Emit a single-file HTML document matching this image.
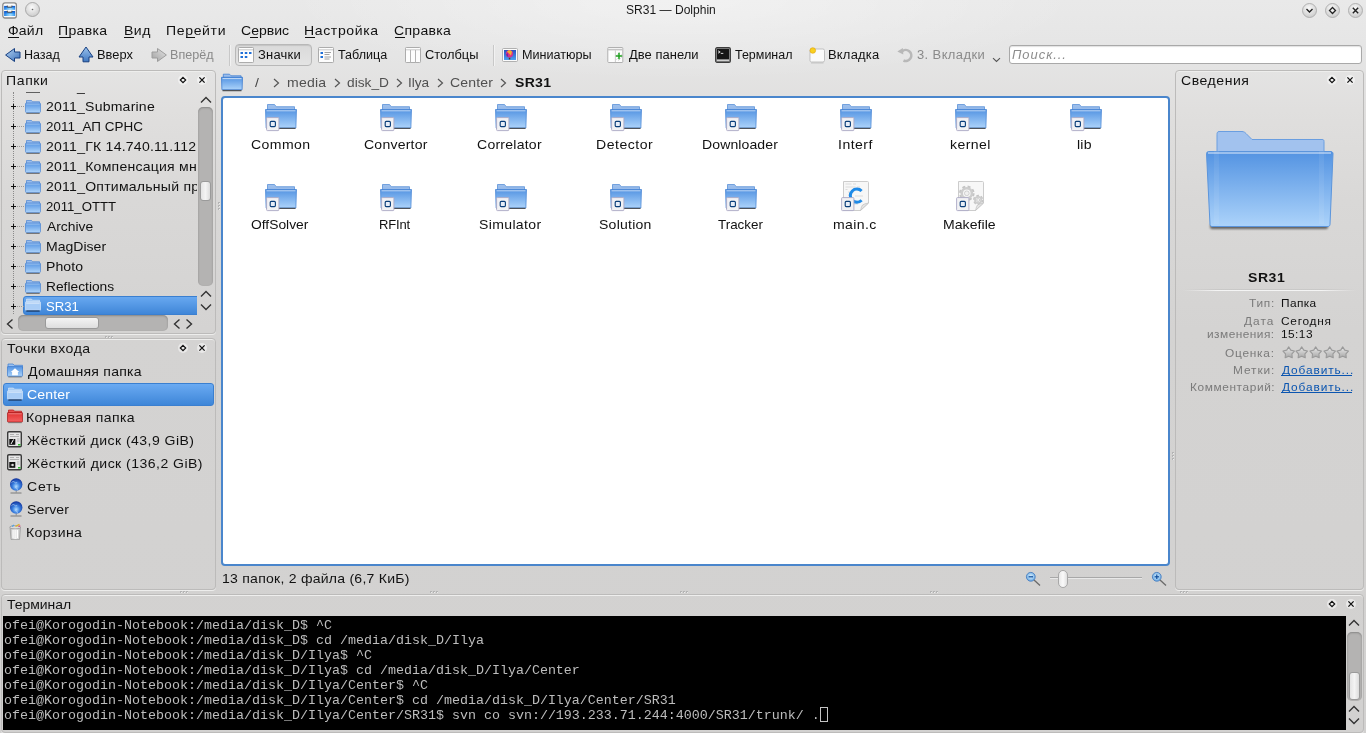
<!DOCTYPE html>
<html><head><meta charset="utf-8"><style>
*{margin:0;padding:0;box-sizing:border-box}
html,body{width:1366px;height:733px;overflow:hidden}
body{position:relative;font-family:"Liberation Sans",sans-serif;color:#111;background:linear-gradient(#e9e9e9 0px,#e5e5e5 55px,#e0dfde 110px,#d9d8d7 200px,#d4d3d2 330px,#d2d1d0 733px)}
.a{position:absolute}
.t{position:absolute;white-space:nowrap;will-change:transform}
.panel{position:absolute;border:1px solid #bcbbba;border-radius:4px;background:transparent;box-shadow:0 1px 0 #ededec,inset 0 1px 0 #eeeeed}
svg{position:absolute;overflow:visible}
</style></head><body>
<svg width="0" height="0" style="left:0;top:0"><defs>
<linearGradient id="gf" x1="0" y1="0" x2="0" y2="1"><stop offset="0" stop-color="#5393e2"/><stop offset="1" stop-color="#acd3fa"/></linearGradient>
<linearGradient id="gt" x1="0" y1="0" x2="0" y2="1"><stop offset="0" stop-color="#9fc0ec"/><stop offset="1" stop-color="#8fb5e8"/></linearGradient>
<linearGradient id="gr" x1="0" y1="0" x2="0" y2="1"><stop offset="0" stop-color="#e03030"/><stop offset="1" stop-color="#f46060"/></linearGradient>
<linearGradient id="gsel" x1="0" y1="0" x2="0" y2="1"><stop offset="0" stop-color="#6aaaf0"/><stop offset="1" stop-color="#3f86d8"/></linearGradient>
<linearGradient id="garr" x1="0" y1="0" x2="0" y2="1"><stop offset="0" stop-color="#9cc4ee"/><stop offset="1" stop-color="#3f77c0"/></linearGradient>
<linearGradient id="ggrey" x1="0" y1="0" x2="0" y2="1"><stop offset="0" stop-color="#d8d8d8"/><stop offset="1" stop-color="#9c9c9c"/></linearGradient>
<radialGradient id="gbtn" cx=".45" cy=".35" r=".7"><stop offset="0" stop-color="#fafafa"/><stop offset="1" stop-color="#c8c8c8"/></radialGradient>
<radialGradient id="gglobe" cx=".5" cy=".65" r=".65"><stop offset="0" stop-color="#b0dcff"/><stop offset=".45" stop-color="#3a80e0"/><stop offset="1" stop-color="#10309a"/></radialGradient>
<radialGradient id="glens" cx=".5" cy=".45" r=".6"><stop offset="0" stop-color="#e0f4ff"/><stop offset="1" stop-color="#5aa0e0"/></radialGradient>
<linearGradient id="garr2" x1="0" y1="0" x2="1" y2="1"><stop offset="0" stop-color="#b4d4f4"/><stop offset="1" stop-color="#3a6fb8"/></linearGradient>
<linearGradient id="ggrey2" x1="1" y1="0" x2="0" y2="1"><stop offset="0" stop-color="#e4e4e4"/><stop offset="1" stop-color="#a0a0a0"/></linearGradient>
<linearGradient id="gtr" x1="0" y1="0" x2="1" y2="0"><stop offset="0" stop-color="#b8b8b8"/><stop offset=".5" stop-color="#f6f6f6"/><stop offset="1" stop-color="#c0c0c0"/></linearGradient>
<linearGradient id="gsky" x1="0" y1="0" x2="0" y2="1"><stop offset="0" stop-color="#2a50c0"/><stop offset="1" stop-color="#4aa0f0"/></linearGradient>
<linearGradient id="gstar" x1="0" y1="0" x2="0" y2="1"><stop offset="0" stop-color="#ececec"/><stop offset="1" stop-color="#a6a6a6"/></linearGradient>
<filter id="blur1" x="-20%" y="-100%" width="140%" height="300%"><feGaussianBlur stdDeviation="1.2"/></filter>
<radialGradient id="gdrw" cx=".55" cy=".8" r=".7"><stop offset="0" stop-color="#b8ecff"/><stop offset=".6" stop-color="#3a9af0"/><stop offset="1" stop-color="#1560d0"/></radialGradient>
</defs></svg>
<div class="a" style="left:283px;top:0;width:800px;height:90px;background:radial-gradient(ellipse 400px 80px at 400px 0,rgba(255,255,255,.4),rgba(255,255,255,0))"></div>
<div class="panel" style="left:1px;top:70px;width:215px;height:264px"></div>
<div class="panel" style="left:1px;top:338px;width:215px;height:252px"></div>
<div class="panel" style="left:1175px;top:70px;width:189px;height:520px"></div>
<div class="panel" style="left:1px;top:594px;width:1363px;height:139px"></div>
<div class="a" style="left:221px;top:96px;width:949px;height:470px;background:#fff;border:2px solid #4a86cc;border-radius:4px"></div>
<div class="a" style="left:3px;top:616px;width:1343px;height:114px;background:#000"></div>
<div class="t" style="left:626.20px;top:4px;font-size:12px;line-height:12px;color:#1a1a1a;letter-spacing:0.000px;transform:scaleX(1.005);transform-origin:0 0">SR31 — Dolphin</div>
<div class="t" style="left:7.89px;top:24px;font-size:13px;line-height:13px;color:#111;letter-spacing:0.173px;transform:scaleX(1.080);transform-origin:0 0">Файл</div>
<div class="t" style="left:58.22px;top:24px;font-size:13px;line-height:13px;color:#111;letter-spacing:0.289px;transform:scaleX(1.080);transform-origin:0 0">Правка</div>
<div class="t" style="left:123.52px;top:24px;font-size:13px;line-height:13px;color:#111;letter-spacing:0.463px;transform:scaleX(1.080);transform-origin:0 0">Вид</div>
<div class="t" style="left:166.12px;top:24px;font-size:13px;line-height:13px;color:#111;letter-spacing:0.597px;transform:scaleX(1.080);transform-origin:0 0">Перейти</div>
<div class="t" style="left:240.59px;top:24px;font-size:13px;line-height:13px;color:#111;letter-spacing:0.000px;transform:scaleX(1.080);transform-origin:0 0">Сервис</div>
<div class="t" style="left:304.32px;top:24px;font-size:13px;line-height:13px;color:#111;letter-spacing:0.586px;transform:scaleX(1.080);transform-origin:0 0">Настройка</div>
<div class="t" style="left:394.49px;top:24px;font-size:13px;line-height:13px;color:#111;letter-spacing:0.282px;transform:scaleX(1.080);transform-origin:0 0">Справка</div>
<div class="a" style="left:8px;top:37px;width:11px;height:1px;background:#111"></div>
<div class="a" style="left:59px;top:37px;width:12px;height:1px;background:#111"></div>
<div class="a" style="left:124px;top:37px;width:10px;height:1px;background:#111"></div>
<div class="a" style="left:186px;top:37px;width:9px;height:1px;background:#111"></div>
<div class="a" style="left:250px;top:37px;width:8px;height:1px;background:#111"></div>
<div class="a" style="left:305px;top:37px;width:10px;height:1px;background:#111"></div>
<div class="a" style="left:395px;top:37px;width:10px;height:1px;background:#111"></div>
<div class="t" style="left:24.26px;top:49px;font-size:12px;line-height:12px;color:#111;letter-spacing:0.000px;transform:scaleX(1.044);transform-origin:0 0">Назад</div>
<div class="t" style="left:97.43px;top:49px;font-size:12px;line-height:12px;color:#111;letter-spacing:0.000px;transform:scaleX(1.070);transform-origin:0 0">Вверх</div>
<div class="t" style="left:169.55px;top:49px;font-size:12px;line-height:12px;color:#8a8a8a;letter-spacing:0.000px;transform:scaleX(1.048);transform-origin:0 0">Вперёд</div>
<div class="t" style="left:258.26px;top:49px;font-size:12px;line-height:12px;color:#111;letter-spacing:0.217px;transform:scaleX(1.080);transform-origin:0 0">Значки</div>
<div class="t" style="left:338.24px;top:49px;font-size:12px;line-height:12px;color:#111;letter-spacing:0.000px;transform:scaleX(1.047);transform-origin:0 0">Таблица</div>
<div class="t" style="left:425.06px;top:49px;font-size:12px;line-height:12px;color:#111;letter-spacing:0.000px;transform:scaleX(1.072);transform-origin:0 0">Столбцы</div>
<div class="t" style="left:521.55px;top:49px;font-size:12px;line-height:12px;color:#111;letter-spacing:0.000px;transform:scaleX(1.052);transform-origin:0 0">Миниатюры</div>
<div class="t" style="left:628.90px;top:49px;font-size:12px;line-height:12px;color:#111;letter-spacing:0.023px;transform:scaleX(1.080);transform-origin:0 0">Две панели</div>
<div class="t" style="left:734.94px;top:49px;font-size:12px;line-height:12px;color:#111;letter-spacing:-0.000px;transform:scaleX(1.040);transform-origin:0 0">Терминал</div>
<div class="t" style="left:828.32px;top:49px;font-size:12px;line-height:12px;color:#111;letter-spacing:0.190px;transform:scaleX(1.080);transform-origin:0 0">Вкладка</div>
<div class="t" style="left:916.96px;top:49px;font-size:12px;line-height:12px;color:#8a8a8a;letter-spacing:0.369px;transform:scaleX(1.080);transform-origin:0 0">3. Вкладки</div>
<div class="a" style="left:1009px;top:45px;width:353px;height:19px;background:#fff;border:1px solid #a9a9a9;border-radius:3px;box-shadow:inset 0 1px 1px rgba(0,0,0,.12)"></div>
<div class="t" style="left:1012.13px;top:49px;font-size:12px;line-height:12px;color:#8c8c8c;letter-spacing:0.892px;font-style:italic;transform:scaleX(1.080);transform-origin:0 0">Поиск...</div>
<div class="t" style="left:6.42px;top:74px;font-size:13px;line-height:13px;color:#111;letter-spacing:0.572px;transform:scaleX(1.080);transform-origin:0 0">Папки</div>
<div class="t" style="left:7.33px;top:342px;font-size:13px;line-height:13px;color:#111;letter-spacing:0.476px;transform:scaleX(1.080);transform-origin:0 0">Точки входа</div>
<div class="t" style="left:1180.89px;top:74px;font-size:13px;line-height:13px;color:#111;letter-spacing:0.507px;transform:scaleX(1.080);transform-origin:0 0">Сведения</div>
<div class="t" style="left:7.03px;top:598px;font-size:13px;line-height:13px;color:#111;letter-spacing:0.000px;transform:scaleX(1.072);transform-origin:0 0">Терминал</div>
<div class="a" style="left:4px;top:92px;width:193px;height:223px;overflow:hidden">
<div class="t" style="left:41.89px;top:-12px;font-size:13px;line-height:13px;color:#111;letter-spacing:0.200px;transform:scaleX(1.080);transform-origin:0 0">2011_Submarine</div>
<div class="a" style="left:19px;top:204px;width:182px;height:19px;background:linear-gradient(#68a8f0,#3f86d8);border:1px solid #3a7fd0;border-radius:3px"></div>
<div class="t" style="left:41.89px;top:8px;font-size:13px;line-height:13px;color:#111;letter-spacing:0.200px;transform:scaleX(1.080);transform-origin:0 0">2011_Submarine</div>
<div class="t" style="left:41.92px;top:28px;font-size:13px;line-height:13px;color:#111;letter-spacing:0.000px;transform:scaleX(1.036);transform-origin:0 0">2011_АП СРНС</div>
<div class="t" style="left:41.89px;top:48px;font-size:13px;line-height:13px;color:#111;letter-spacing:0.220px;transform:scaleX(1.080);transform-origin:0 0">2011_ГК 14.740.11.112</div>
<div class="t" style="left:41.89px;top:68px;font-size:13px;line-height:13px;color:#111;letter-spacing:0.220px;transform:scaleX(1.080);transform-origin:0 0">2011_Компенсация мн</div>
<div class="t" style="left:41.89px;top:88px;font-size:13px;line-height:13px;color:#111;letter-spacing:0.220px;transform:scaleX(1.080);transform-origin:0 0">2011_Оптимальный пр</div>
<div class="t" style="left:41.94px;top:108px;font-size:13px;line-height:13px;color:#111;letter-spacing:0.000px;transform:scaleX(1.014);transform-origin:0 0">2011_OTTT</div>
<div class="t" style="left:42.70px;top:128px;font-size:13px;line-height:13px;color:#111;letter-spacing:0.000px;transform:scaleX(1.064);transform-origin:0 0">Archive</div>
<div class="t" style="left:41.62px;top:148px;font-size:13px;line-height:13px;color:#111;letter-spacing:0.005px;transform:scaleX(1.080);transform-origin:0 0">MagDiser</div>
<div class="t" style="left:41.62px;top:168px;font-size:13px;line-height:13px;color:#111;letter-spacing:0.069px;transform:scaleX(1.080);transform-origin:0 0">Photo</div>
<div class="t" style="left:41.64px;top:188px;font-size:13px;line-height:13px;color:#111;letter-spacing:0.000px;transform:scaleX(1.060);transform-origin:0 0">Reflections</div>
<div class="t" style="left:42.19px;top:208px;font-size:13px;line-height:13px;color:#fff;letter-spacing:-0.000px;transform:scaleX(1.011);transform-origin:0 0">SR31</div>
</div>
<div class="a" style="left:13px;top:92px;width:1px;height:222px;border-left:1px dotted #8a8a8a"></div>
<div class="a" style="left:17px;top:106px;width:7px;height:1px;border-top:1px dotted #9a9a9a"></div>
<div class="a" style="left:11px;top:106px;width:5px;height:1px;background:#111"></div>
<div class="a" style="left:13px;top:104px;width:1px;height:5px;background:#111"></div>
<svg style="left:25px;top:98px" width="16" height="16" viewBox="0 0 16 16"><path d="M1.5 2.5h5l1 1.2h7v3h-13z" fill="url(#gt)" stroke="#3b7bd0" stroke-width=".6"/><rect x=".5" y="5" width="15" height="9.5" rx="1" fill="url(#gf)" stroke="#3b7bd0" stroke-width=".6"/><path d="M1.3 6h13.4" stroke="#fff" stroke-opacity=".55" stroke-width=".8"/><path d="M1.3 15.4h13.4" stroke="#505050" stroke-opacity=".75" stroke-width="1.1"/></svg>
<div class="a" style="left:17px;top:126px;width:7px;height:1px;border-top:1px dotted #9a9a9a"></div>
<div class="a" style="left:11px;top:126px;width:5px;height:1px;background:#111"></div>
<div class="a" style="left:13px;top:124px;width:1px;height:5px;background:#111"></div>
<svg style="left:25px;top:118px" width="16" height="16" viewBox="0 0 16 16"><path d="M1.5 2.5h5l1 1.2h7v3h-13z" fill="url(#gt)" stroke="#3b7bd0" stroke-width=".6"/><rect x=".5" y="5" width="15" height="9.5" rx="1" fill="url(#gf)" stroke="#3b7bd0" stroke-width=".6"/><path d="M1.3 6h13.4" stroke="#fff" stroke-opacity=".55" stroke-width=".8"/><path d="M1.3 15.4h13.4" stroke="#505050" stroke-opacity=".75" stroke-width="1.1"/></svg>
<div class="a" style="left:17px;top:146px;width:7px;height:1px;border-top:1px dotted #9a9a9a"></div>
<div class="a" style="left:11px;top:146px;width:5px;height:1px;background:#111"></div>
<div class="a" style="left:13px;top:144px;width:1px;height:5px;background:#111"></div>
<svg style="left:25px;top:138px" width="16" height="16" viewBox="0 0 16 16"><path d="M1.5 2.5h5l1 1.2h7v3h-13z" fill="url(#gt)" stroke="#3b7bd0" stroke-width=".6"/><rect x=".5" y="5" width="15" height="9.5" rx="1" fill="url(#gf)" stroke="#3b7bd0" stroke-width=".6"/><path d="M1.3 6h13.4" stroke="#fff" stroke-opacity=".55" stroke-width=".8"/><path d="M1.3 15.4h13.4" stroke="#505050" stroke-opacity=".75" stroke-width="1.1"/></svg>
<div class="a" style="left:17px;top:166px;width:7px;height:1px;border-top:1px dotted #9a9a9a"></div>
<div class="a" style="left:11px;top:166px;width:5px;height:1px;background:#111"></div>
<div class="a" style="left:13px;top:164px;width:1px;height:5px;background:#111"></div>
<svg style="left:25px;top:158px" width="16" height="16" viewBox="0 0 16 16"><path d="M1.5 2.5h5l1 1.2h7v3h-13z" fill="url(#gt)" stroke="#3b7bd0" stroke-width=".6"/><rect x=".5" y="5" width="15" height="9.5" rx="1" fill="url(#gf)" stroke="#3b7bd0" stroke-width=".6"/><path d="M1.3 6h13.4" stroke="#fff" stroke-opacity=".55" stroke-width=".8"/><path d="M1.3 15.4h13.4" stroke="#505050" stroke-opacity=".75" stroke-width="1.1"/></svg>
<div class="a" style="left:17px;top:186px;width:7px;height:1px;border-top:1px dotted #9a9a9a"></div>
<div class="a" style="left:11px;top:186px;width:5px;height:1px;background:#111"></div>
<div class="a" style="left:13px;top:184px;width:1px;height:5px;background:#111"></div>
<svg style="left:25px;top:178px" width="16" height="16" viewBox="0 0 16 16"><path d="M1.5 2.5h5l1 1.2h7v3h-13z" fill="url(#gt)" stroke="#3b7bd0" stroke-width=".6"/><rect x=".5" y="5" width="15" height="9.5" rx="1" fill="url(#gf)" stroke="#3b7bd0" stroke-width=".6"/><path d="M1.3 6h13.4" stroke="#fff" stroke-opacity=".55" stroke-width=".8"/><path d="M1.3 15.4h13.4" stroke="#505050" stroke-opacity=".75" stroke-width="1.1"/></svg>
<div class="a" style="left:17px;top:206px;width:7px;height:1px;border-top:1px dotted #9a9a9a"></div>
<div class="a" style="left:11px;top:206px;width:5px;height:1px;background:#111"></div>
<div class="a" style="left:13px;top:204px;width:1px;height:5px;background:#111"></div>
<svg style="left:25px;top:198px" width="16" height="16" viewBox="0 0 16 16"><path d="M1.5 2.5h5l1 1.2h7v3h-13z" fill="url(#gt)" stroke="#3b7bd0" stroke-width=".6"/><rect x=".5" y="5" width="15" height="9.5" rx="1" fill="url(#gf)" stroke="#3b7bd0" stroke-width=".6"/><path d="M1.3 6h13.4" stroke="#fff" stroke-opacity=".55" stroke-width=".8"/><path d="M1.3 15.4h13.4" stroke="#505050" stroke-opacity=".75" stroke-width="1.1"/></svg>
<div class="a" style="left:17px;top:226px;width:7px;height:1px;border-top:1px dotted #9a9a9a"></div>
<div class="a" style="left:11px;top:226px;width:5px;height:1px;background:#111"></div>
<div class="a" style="left:13px;top:224px;width:1px;height:5px;background:#111"></div>
<svg style="left:25px;top:218px" width="16" height="16" viewBox="0 0 16 16"><path d="M1.5 2.5h5l1 1.2h7v3h-13z" fill="url(#gt)" stroke="#3b7bd0" stroke-width=".6"/><rect x=".5" y="5" width="15" height="9.5" rx="1" fill="url(#gf)" stroke="#3b7bd0" stroke-width=".6"/><path d="M1.3 6h13.4" stroke="#fff" stroke-opacity=".55" stroke-width=".8"/><path d="M1.3 15.4h13.4" stroke="#505050" stroke-opacity=".75" stroke-width="1.1"/></svg>
<div class="a" style="left:17px;top:246px;width:7px;height:1px;border-top:1px dotted #9a9a9a"></div>
<div class="a" style="left:11px;top:246px;width:5px;height:1px;background:#111"></div>
<div class="a" style="left:13px;top:244px;width:1px;height:5px;background:#111"></div>
<svg style="left:25px;top:238px" width="16" height="16" viewBox="0 0 16 16"><path d="M1.5 2.5h5l1 1.2h7v3h-13z" fill="url(#gt)" stroke="#3b7bd0" stroke-width=".6"/><rect x=".5" y="5" width="15" height="9.5" rx="1" fill="url(#gf)" stroke="#3b7bd0" stroke-width=".6"/><path d="M1.3 6h13.4" stroke="#fff" stroke-opacity=".55" stroke-width=".8"/><path d="M1.3 15.4h13.4" stroke="#505050" stroke-opacity=".75" stroke-width="1.1"/></svg>
<div class="a" style="left:17px;top:266px;width:7px;height:1px;border-top:1px dotted #9a9a9a"></div>
<div class="a" style="left:11px;top:266px;width:5px;height:1px;background:#111"></div>
<div class="a" style="left:13px;top:264px;width:1px;height:5px;background:#111"></div>
<svg style="left:25px;top:258px" width="16" height="16" viewBox="0 0 16 16"><path d="M1.5 2.5h5l1 1.2h7v3h-13z" fill="url(#gt)" stroke="#3b7bd0" stroke-width=".6"/><rect x=".5" y="5" width="15" height="9.5" rx="1" fill="url(#gf)" stroke="#3b7bd0" stroke-width=".6"/><path d="M1.3 6h13.4" stroke="#fff" stroke-opacity=".55" stroke-width=".8"/><path d="M1.3 15.4h13.4" stroke="#505050" stroke-opacity=".75" stroke-width="1.1"/></svg>
<div class="a" style="left:17px;top:286px;width:7px;height:1px;border-top:1px dotted #9a9a9a"></div>
<div class="a" style="left:11px;top:286px;width:5px;height:1px;background:#111"></div>
<div class="a" style="left:13px;top:284px;width:1px;height:5px;background:#111"></div>
<svg style="left:25px;top:278px" width="16" height="16" viewBox="0 0 16 16"><path d="M1.5 2.5h5l1 1.2h7v3h-13z" fill="url(#gt)" stroke="#3b7bd0" stroke-width=".6"/><rect x=".5" y="5" width="15" height="9.5" rx="1" fill="url(#gf)" stroke="#3b7bd0" stroke-width=".6"/><path d="M1.3 6h13.4" stroke="#fff" stroke-opacity=".55" stroke-width=".8"/><path d="M1.3 15.4h13.4" stroke="#505050" stroke-opacity=".75" stroke-width="1.1"/></svg>
<div class="a" style="left:17px;top:306px;width:7px;height:1px;border-top:1px dotted #9a9a9a"></div>
<div class="a" style="left:11px;top:306px;width:5px;height:1px;background:#111"></div>
<div class="a" style="left:13px;top:304px;width:1px;height:5px;background:#111"></div>
<svg style="left:25px;top:298px" width="16" height="16" viewBox="0 0 16 16"><path d="M1.5 1h5l1 1.2h7v3h-13z" fill="#a8ccf4" stroke="#dce9f8" stroke-width=".6"/><rect x=".5" y="3.8" width="15" height="8.5" rx=".6" fill="#a9cdf6" stroke="#e4eefa" stroke-width=".6"/><path d="M1.3 5.2h13.4" stroke="#fff" stroke-opacity=".7" stroke-width=".8"/><path d="M1.3 13h13.4" stroke="#163560" stroke-width="1.3"/></svg>
<div class="a" style="left:26px;top:92px;width:14px;height:1px;background:#606060"></div>
<svg style="left:199px;top:96px" width="14" height="8" viewBox="0 0 14 8"><path d="M2 6.5l5-5 5 5" fill="none" stroke="#333" stroke-width="1.4"/></svg>
<div class="a" style="left:198px;top:107px;width:15px;height:179px;background:#b4b3b2;border-radius:5px;box-shadow:inset 0 1px 2px rgba(0,0,0,.25)"></div>
<div class="a" style="left:200px;top:181px;width:11px;height:20px;background:linear-gradient(90deg,#e4e4e4,#f4f4f4,#dcdcdc);border:1px solid #9a9a9a;border-radius:3px"></div>
<svg style="left:199px;top:290px" width="14" height="8" viewBox="0 0 14 8"><path d="M2 6.5l5-5 5 5" fill="none" stroke="#333" stroke-width="1.4"/></svg>
<svg style="left:199px;top:303px" width="14" height="8" viewBox="0 0 14 8"><path d="M2 1.5l5 5 5-5" fill="none" stroke="#333" stroke-width="1.4"/></svg>
<svg style="left:6px;top:318px" width="8" height="12" viewBox="0 0 8 12"><path d="M6.5 1.5l-5 4.5 5 4.5" fill="none" stroke="#333" stroke-width="1.4"/></svg>
<div class="a" style="left:18px;top:315px;width:150px;height:16px;background:#b4b3b2;border-radius:5px;box-shadow:inset 0 1px 2px rgba(0,0,0,.25)"></div>
<div class="a" style="left:45px;top:317px;width:54px;height:12px;background:linear-gradient(#f4f4f4,#dedede);border:1px solid #9a9a9a;border-radius:3px"></div>
<svg style="left:173px;top:318px" width="8" height="12" viewBox="0 0 8 12"><path d="M6.5 1.5l-5 4.5 5 4.5" fill="none" stroke="#333" stroke-width="1.4"/></svg>
<svg style="left:185px;top:318px" width="8" height="12" viewBox="0 0 8 12"><path d="M1.5 1.5l5 4.5-5 4.5" fill="none" stroke="#333" stroke-width="1.4"/></svg>
<svg style="left:176.5px;top:73.5px" width="12" height="12" viewBox="0 0 12 12"><circle cx="6" cy="6" r="5" fill="#fff" fill-opacity=".5"/><path d="M6 3.3L8.7 6 6 8.7 3.3 6z" fill="none" stroke="#111" stroke-width="1.2"/></svg>
<svg style="left:195.5px;top:73.5px" width="12" height="12" viewBox="0 0 12 12"><circle cx="6" cy="6" r="5" fill="#fff" fill-opacity=".5"/><path d="M3.4 3.4l5.2 5.2M8.6 3.4l-5.2 5.2" stroke="#111" stroke-width="1.3"/></svg>
<svg style="left:176.5px;top:342.4px" width="12" height="12" viewBox="0 0 12 12"><circle cx="6" cy="6" r="5" fill="#fff" fill-opacity=".5"/><path d="M6 3.3L8.7 6 6 8.7 3.3 6z" fill="none" stroke="#111" stroke-width="1.2"/></svg>
<svg style="left:195.5px;top:342.4px" width="12" height="12" viewBox="0 0 12 12"><circle cx="6" cy="6" r="5" fill="#fff" fill-opacity=".5"/><path d="M3.4 3.4l5.2 5.2M8.6 3.4l-5.2 5.2" stroke="#111" stroke-width="1.3"/></svg>
<svg style="left:1325.5px;top:73.8px" width="12" height="12" viewBox="0 0 12 12"><circle cx="6" cy="6" r="5" fill="#fff" fill-opacity=".5"/><path d="M6 3.3L8.7 6 6 8.7 3.3 6z" fill="none" stroke="#111" stroke-width="1.2"/></svg>
<svg style="left:1344.3px;top:73.8px" width="12" height="12" viewBox="0 0 12 12"><circle cx="6" cy="6" r="5" fill="#fff" fill-opacity=".5"/><path d="M3.4 3.4l5.2 5.2M8.6 3.4l-5.2 5.2" stroke="#111" stroke-width="1.3"/></svg>
<svg style="left:1325.5px;top:598px" width="12" height="12" viewBox="0 0 12 12"><circle cx="6" cy="6" r="5" fill="#fff" fill-opacity=".5"/><path d="M6 3.3L8.7 6 6 8.7 3.3 6z" fill="none" stroke="#111" stroke-width="1.2"/></svg>
<svg style="left:1344.5px;top:598px" width="12" height="12" viewBox="0 0 12 12"><circle cx="6" cy="6" r="5" fill="#fff" fill-opacity=".5"/><path d="M3.4 3.4l5.2 5.2M8.6 3.4l-5.2 5.2" stroke="#111" stroke-width="1.3"/></svg>
<div class="a" style="left:3px;top:383px;width:211px;height:23px;background:linear-gradient(#6aaaf2,#3e86d8);border:1px solid #3a7fd0;border-radius:3px"></div>
<div class="t" style="left:27.50px;top:365px;font-size:13px;line-height:13px;color:#111;letter-spacing:0.233px;transform:scaleX(1.080);transform-origin:0 0">Домашняя папка</div>
<div class="t" style="left:26.69px;top:388px;font-size:13px;line-height:13px;color:#fff;letter-spacing:0.165px;transform:scaleX(1.080);transform-origin:0 0">Center</div>
<div class="t" style="left:26.42px;top:411px;font-size:13px;line-height:13px;color:#111;letter-spacing:0.387px;transform:scaleX(1.080);transform-origin:0 0">Корневая папка</div>
<div class="t" style="left:27.23px;top:434px;font-size:13px;line-height:13px;color:#111;letter-spacing:0.421px;transform:scaleX(1.080);transform-origin:0 0">Жёсткий диск (43,9 GiB)</div>
<div class="t" style="left:27.23px;top:457px;font-size:13px;line-height:13px;color:#111;letter-spacing:0.430px;transform:scaleX(1.080);transform-origin:0 0">Жёсткий диск (136,2 GiB)</div>
<div class="t" style="left:26.69px;top:480px;font-size:13px;line-height:13px;color:#111;letter-spacing:0.719px;transform:scaleX(1.080);transform-origin:0 0">Сеть</div>
<div class="t" style="left:26.96px;top:503px;font-size:13px;line-height:13px;color:#111;letter-spacing:0.098px;transform:scaleX(1.080);transform-origin:0 0">Server</div>
<div class="t" style="left:26.42px;top:526px;font-size:13px;line-height:13px;color:#111;letter-spacing:0.373px;transform:scaleX(1.080);transform-origin:0 0">Корзина</div>
<svg style="left:7px;top:363px" width="16" height="16" viewBox="0 0 16 16"><path d="M1 1h5l1.2 1.3h8.3v3h-14.5z" fill="#9cc0ee" stroke="#3b7bd0" stroke-width=".7"/><rect x=".5" y="3.5" width="15" height="9.8" rx=".6" fill="url(#gf)" stroke="#3b7bd0" stroke-width=".7"/><path d="M8 5.3l-4.2 3.6h1.3v3.3h5.8v-3.3h1.3z" fill="#fff"/><path d="M1.3 14h13.4" stroke="#404040" stroke-opacity=".5" stroke-width="1"/></svg>
<svg style="left:7px;top:387px" width="16" height="16" viewBox="0 0 16 16"><path d="M1.5 1h5l1 1.2h7v3h-13z" fill="#a8ccf4" stroke="#dce9f8" stroke-width=".6"/><rect x=".5" y="3.8" width="15" height="8.5" rx=".6" fill="#a9cdf6" stroke="#e4eefa" stroke-width=".6"/><path d="M1.3 5.2h13.4" stroke="#fff" stroke-opacity=".7" stroke-width=".8"/><path d="M1.3 13h13.4" stroke="#163560" stroke-width="1.3"/></svg>
<svg style="left:7px;top:409px" width="16" height="16" viewBox="0 0 16 16"><path d="M1.5 1h5l1 1.2h7v3h-13z" fill="#e85050" stroke="#b01818" stroke-width=".7"/><rect x=".5" y="3.5" width="15" height="9.5" rx=".6" fill="url(#gr)" stroke="#a81818" stroke-width=".7"/><path d="M1.3 4.8h13.4" stroke="#fff" stroke-opacity=".45" stroke-width=".8"/><path d="M1.3 13.7h13.4" stroke="#404040" stroke-opacity=".5" stroke-width="1"/></svg>
<svg style="left:7px;top:431px" width="16" height="17" viewBox="0 0 16 17"><rect x=".7" y=".7" width="13.6" height="15" rx="1.2" fill="#e6e6e6" stroke="#3a3a3a" stroke-width="1.4"/><path d="M3 3.5h4M3 5.5h9M9 3.5h3M10 8h2.5M10 10h2.5" stroke="#9a9a9a" stroke-width=".7"/><rect x="2.3" y="8" width="6" height="5.8" fill="#111"/><path d="M4 13l2.5-4.5" stroke="#fff" stroke-width="1"/><rect x="11" y="13" width="2.5" height="1.5" fill="#2ec02e"/></svg>
<svg style="left:7px;top:454px" width="16" height="17" viewBox="0 0 16 17"><rect x=".7" y=".7" width="13.6" height="15" rx="1.2" fill="#e6e6e6" stroke="#3a3a3a" stroke-width="1.4"/><path d="M3 3.5h4M3 5.5h9M9 3.5h3M10 8h2.5M10 10h2.5" stroke="#9a9a9a" stroke-width=".7"/><rect x="2.3" y="8" width="6" height="5.8" fill="#111"/><path d="M3.8 11h3M5.8 9.8v2.4" stroke="#fff" stroke-width="1"/><rect x="11" y="13" width="2.5" height="1.5" fill="#2ec02e"/></svg>
<svg style="left:9px;top:478px" width="16" height="16" viewBox="0 0 16 16"><circle cx="7.2" cy="6.5" r="6.2" fill="url(#gglobe)"/><path d="M2.5 4.5c1.5-1.5 3-1 3.5 0s1.5 1 2-.5M6 9c1 .5 2 1 2.5 3" fill="none" stroke="#cfe6ff" stroke-opacity=".55" stroke-width="1"/><path d="M1.5 15h11" stroke="#7a7a7a" stroke-width="1"/><path d="M7.2 12.8v1.8" stroke="#8a8a8a" stroke-width="1"/></svg>
<svg style="left:9px;top:501px" width="16" height="16" viewBox="0 0 16 16"><circle cx="7.2" cy="6.5" r="6.2" fill="url(#gglobe)"/><path d="M2.5 4.5c1.5-1.5 3-1 3.5 0s1.5 1 2-.5M6 9c1 .5 2 1 2.5 3" fill="none" stroke="#cfe6ff" stroke-opacity=".55" stroke-width="1"/><path d="M1.5 15h11" stroke="#7a7a7a" stroke-width="1"/><path d="M7.2 12.8v1.8" stroke="#8a8a8a" stroke-width="1"/></svg>
<svg style="left:9px;top:524px" width="13" height="16" viewBox="0 0 13 16"><path d="M1 3.5h10.5l-1 12h-8.5z" fill="url(#gtr)" stroke="#9a9a9a" stroke-width=".7"/><ellipse cx="6.2" cy="3.3" rx="5.5" ry="1.6" fill="#dcdcdc" stroke="#8a8a8a" stroke-width=".7"/><path d="M4 6v8M8.5 6v8" stroke="#fff" stroke-width="1"/><path d="M6.5 2.5l4-2.2" stroke="#e0b020" stroke-width="1.3"/><path d="M3 2.5l2-1.5" stroke="#50a0e0" stroke-width="1.2"/><path d="M9.5 2.8l1.8-1" stroke="#e04080" stroke-width="1.1"/></svg>
<svg style="left:221px;top:73px" width="22" height="19" viewBox="0 0 22 19"><path d="M2.3 1.2h6.2l1.6 1.6h10v3h-17.8z" fill="url(#gt)" stroke="#3f7fd2" stroke-width=".8"/><path d="M.5 4.3h21l-.4 12.4h-20.2z" fill="url(#gf)" stroke="#3b7bd0" stroke-width=".8"/><path d="M1.5 5.6h19" stroke="#fff" stroke-opacity=".65" stroke-width="1"/><path d="M1.5 17.6h19" stroke="#333" stroke-opacity=".8" stroke-width="1.3"/></svg>
<div class="t" style="left:254.70px;top:76px;font-size:13px;line-height:13px;color:#444;letter-spacing:0.000px;transform:scaleX(1.080);transform-origin:0 0">/</div>
<svg style="left:273px;top:78px" width="7" height="10" viewBox="0 0 7 10"><path d="M1 1l4.5 4-4.5 4" fill="none" stroke="#555" stroke-width="1.2"/></svg>
<svg style="left:333.5px;top:78px" width="7" height="10" viewBox="0 0 7 10"><path d="M1 1l4.5 4-4.5 4" fill="none" stroke="#555" stroke-width="1.2"/></svg>
<svg style="left:395.9px;top:78px" width="7" height="10" viewBox="0 0 7 10"><path d="M1 1l4.5 4-4.5 4" fill="none" stroke="#555" stroke-width="1.2"/></svg>
<svg style="left:436.9px;top:78px" width="7" height="10" viewBox="0 0 7 10"><path d="M1 1l4.5 4-4.5 4" fill="none" stroke="#555" stroke-width="1.2"/></svg>
<svg style="left:499.7px;top:78px" width="7" height="10" viewBox="0 0 7 10"><path d="M1 1l4.5 4-4.5 4" fill="none" stroke="#555" stroke-width="1.2"/></svg>
<div class="t" style="left:286.99px;top:76px;font-size:13px;line-height:13px;color:#505050;letter-spacing:0.201px;transform:scaleX(1.080);transform-origin:0 0">media</div>
<div class="t" style="left:347.07px;top:76px;font-size:13px;line-height:13px;color:#505050;letter-spacing:0.000px;transform:scaleX(1.055);transform-origin:0 0">disk_D</div>
<div class="t" style="left:407.99px;top:76px;font-size:13px;line-height:13px;color:#505050;letter-spacing:0.000px;transform:scaleX(1.047);transform-origin:0 0">Ilya</div>
<div class="t" style="left:449.79px;top:76px;font-size:13px;line-height:13px;color:#505050;letter-spacing:0.128px;transform:scaleX(1.080);transform-origin:0 0">Center</div>
<div class="t" style="left:515.16px;top:76px;font-size:13px;line-height:13px;color:#111;letter-spacing:0.281px;font-weight:bold;transform:scaleX(1.080);transform-origin:0 0">SR31</div>
<div class="t" style="left:250.89px;top:138px;font-size:13px;line-height:13px;color:#111;letter-spacing:0.398px;transform:scaleX(1.080);transform-origin:0 0">Common</div>
<svg style="left:265px;top:104px" width="32" height="27" viewBox="0 0 32 27"><path d="M2.5 .5h7l1.8 2.2h18.2v6h-27z" fill="url(#gt)" stroke="#4a86d4" stroke-width=".7"/><path d="M.5 5.5h31l-.6 18.5h-29.8z" fill="url(#gf)" stroke="#3f7fd2" stroke-width=".7"/><path d="M1.5 6.8h29" stroke="#fff" stroke-opacity=".6" stroke-width="1"/><path d="M1.5 24.4h29" stroke="#333" stroke-opacity=".8" stroke-width="1.2"/></svg>
<svg style="left:266px;top:117px" width="13" height="14" viewBox="0 0 13 14"><rect x=".6" y=".6" width="12.3" height="13" rx=".8" fill="#f2f2f4" stroke="#aaa8c4" stroke-width=".9"/><rect x="4.2" y="4.4" width="5.2" height="5.2" rx="1" fill="#e8eef8" stroke="#0b3f7a" stroke-width="1.15"/></svg>
<div class="t" style="left:363.59px;top:138px;font-size:13px;line-height:13px;color:#111;letter-spacing:0.203px;transform:scaleX(1.080);transform-origin:0 0">Convertor</div>
<svg style="left:380px;top:104px" width="32" height="27" viewBox="0 0 32 27"><path d="M2.5 .5h7l1.8 2.2h18.2v6h-27z" fill="url(#gt)" stroke="#4a86d4" stroke-width=".7"/><path d="M.5 5.5h31l-.6 18.5h-29.8z" fill="url(#gf)" stroke="#3f7fd2" stroke-width=".7"/><path d="M1.5 6.8h29" stroke="#fff" stroke-opacity=".6" stroke-width="1"/><path d="M1.5 24.4h29" stroke="#333" stroke-opacity=".8" stroke-width="1.2"/></svg>
<svg style="left:381px;top:117px" width="13" height="14" viewBox="0 0 13 14"><rect x=".6" y=".6" width="12.3" height="13" rx=".8" fill="#f2f2f4" stroke="#aaa8c4" stroke-width=".9"/><rect x="4.2" y="4.4" width="5.2" height="5.2" rx="1" fill="#e8eef8" stroke="#0b3f7a" stroke-width="1.15"/></svg>
<div class="t" style="left:477.49px;top:138px;font-size:13px;line-height:13px;color:#111;letter-spacing:0.220px;transform:scaleX(1.080);transform-origin:0 0">Correlator</div>
<svg style="left:495px;top:104px" width="32" height="27" viewBox="0 0 32 27"><path d="M2.5 .5h7l1.8 2.2h18.2v6h-27z" fill="url(#gt)" stroke="#4a86d4" stroke-width=".7"/><path d="M.5 5.5h31l-.6 18.5h-29.8z" fill="url(#gf)" stroke="#3f7fd2" stroke-width=".7"/><path d="M1.5 6.8h29" stroke="#fff" stroke-opacity=".6" stroke-width="1"/><path d="M1.5 24.4h29" stroke="#333" stroke-opacity=".8" stroke-width="1.2"/></svg>
<svg style="left:496px;top:117px" width="13" height="14" viewBox="0 0 13 14"><rect x=".6" y=".6" width="12.3" height="13" rx=".8" fill="#f2f2f4" stroke="#aaa8c4" stroke-width=".9"/><rect x="4.2" y="4.4" width="5.2" height="5.2" rx="1" fill="#e8eef8" stroke="#0b3f7a" stroke-width="1.15"/></svg>
<div class="t" style="left:596.22px;top:138px;font-size:13px;line-height:13px;color:#111;letter-spacing:0.484px;transform:scaleX(1.080);transform-origin:0 0">Detector</div>
<svg style="left:610px;top:104px" width="32" height="27" viewBox="0 0 32 27"><path d="M2.5 .5h7l1.8 2.2h18.2v6h-27z" fill="url(#gt)" stroke="#4a86d4" stroke-width=".7"/><path d="M.5 5.5h31l-.6 18.5h-29.8z" fill="url(#gf)" stroke="#3f7fd2" stroke-width=".7"/><path d="M1.5 6.8h29" stroke="#fff" stroke-opacity=".6" stroke-width="1"/><path d="M1.5 24.4h29" stroke="#333" stroke-opacity=".8" stroke-width="1.2"/></svg>
<svg style="left:611px;top:117px" width="13" height="14" viewBox="0 0 13 14"><rect x=".6" y=".6" width="12.3" height="13" rx=".8" fill="#f2f2f4" stroke="#aaa8c4" stroke-width=".9"/><rect x="4.2" y="4.4" width="5.2" height="5.2" rx="1" fill="#e8eef8" stroke="#0b3f7a" stroke-width="1.15"/></svg>
<div class="t" style="left:702.32px;top:138px;font-size:13px;line-height:13px;color:#111;letter-spacing:0.092px;transform:scaleX(1.080);transform-origin:0 0">Downloader</div>
<svg style="left:725px;top:104px" width="32" height="27" viewBox="0 0 32 27"><path d="M2.5 .5h7l1.8 2.2h18.2v6h-27z" fill="url(#gt)" stroke="#4a86d4" stroke-width=".7"/><path d="M.5 5.5h31l-.6 18.5h-29.8z" fill="url(#gf)" stroke="#3f7fd2" stroke-width=".7"/><path d="M1.5 6.8h29" stroke="#fff" stroke-opacity=".6" stroke-width="1"/><path d="M1.5 24.4h29" stroke="#333" stroke-opacity=".8" stroke-width="1.2"/></svg>
<svg style="left:726px;top:117px" width="13" height="14" viewBox="0 0 13 14"><rect x=".6" y=".6" width="12.3" height="13" rx=".8" fill="#f2f2f4" stroke="#aaa8c4" stroke-width=".9"/><rect x="4.2" y="4.4" width="5.2" height="5.2" rx="1" fill="#e8eef8" stroke="#0b3f7a" stroke-width="1.15"/></svg>
<div class="t" style="left:837.65px;top:138px;font-size:13px;line-height:13px;color:#111;letter-spacing:0.448px;transform:scaleX(1.080);transform-origin:0 0">Interf</div>
<svg style="left:840px;top:104px" width="32" height="27" viewBox="0 0 32 27"><path d="M2.5 .5h7l1.8 2.2h18.2v6h-27z" fill="url(#gt)" stroke="#4a86d4" stroke-width=".7"/><path d="M.5 5.5h31l-.6 18.5h-29.8z" fill="url(#gf)" stroke="#3f7fd2" stroke-width=".7"/><path d="M1.5 6.8h29" stroke="#fff" stroke-opacity=".6" stroke-width="1"/><path d="M1.5 24.4h29" stroke="#333" stroke-opacity=".8" stroke-width="1.2"/></svg>
<svg style="left:841px;top:117px" width="13" height="14" viewBox="0 0 13 14"><rect x=".6" y=".6" width="12.3" height="13" rx=".8" fill="#f2f2f4" stroke="#aaa8c4" stroke-width=".9"/><rect x="4.2" y="4.4" width="5.2" height="5.2" rx="1" fill="#e8eef8" stroke="#0b3f7a" stroke-width="1.15"/></svg>
<div class="t" style="left:950.09px;top:138px;font-size:13px;line-height:13px;color:#111;letter-spacing:0.398px;transform:scaleX(1.080);transform-origin:0 0">kernel</div>
<svg style="left:955px;top:104px" width="32" height="27" viewBox="0 0 32 27"><path d="M2.5 .5h7l1.8 2.2h18.2v6h-27z" fill="url(#gt)" stroke="#4a86d4" stroke-width=".7"/><path d="M.5 5.5h31l-.6 18.5h-29.8z" fill="url(#gf)" stroke="#3f7fd2" stroke-width=".7"/><path d="M1.5 6.8h29" stroke="#fff" stroke-opacity=".6" stroke-width="1"/><path d="M1.5 24.4h29" stroke="#333" stroke-opacity=".8" stroke-width="1.2"/></svg>
<svg style="left:956px;top:117px" width="13" height="14" viewBox="0 0 13 14"><rect x=".6" y=".6" width="12.3" height="13" rx=".8" fill="#f2f2f4" stroke="#aaa8c4" stroke-width=".9"/><rect x="4.2" y="4.4" width="5.2" height="5.2" rx="1" fill="#e8eef8" stroke="#0b3f7a" stroke-width="1.15"/></svg>
<div class="t" style="left:1077.19px;top:138px;font-size:13px;line-height:13px;color:#111;letter-spacing:0.236px;transform:scaleX(1.080);transform-origin:0 0">lib</div>
<svg style="left:1070px;top:104px" width="32" height="27" viewBox="0 0 32 27"><path d="M2.5 .5h7l1.8 2.2h18.2v6h-27z" fill="url(#gt)" stroke="#4a86d4" stroke-width=".7"/><path d="M.5 5.5h31l-.6 18.5h-29.8z" fill="url(#gf)" stroke="#3f7fd2" stroke-width=".7"/><path d="M1.5 6.8h29" stroke="#fff" stroke-opacity=".6" stroke-width="1"/><path d="M1.5 24.4h29" stroke="#333" stroke-opacity=".8" stroke-width="1.2"/></svg>
<svg style="left:1071px;top:117px" width="13" height="14" viewBox="0 0 13 14"><rect x=".6" y=".6" width="12.3" height="13" rx=".8" fill="#f2f2f4" stroke="#aaa8c4" stroke-width=".9"/><rect x="4.2" y="4.4" width="5.2" height="5.2" rx="1" fill="#e8eef8" stroke="#0b3f7a" stroke-width="1.15"/></svg>
<div class="t" style="left:251.37px;top:218px;font-size:13px;line-height:13px;color:#111;letter-spacing:0.000px;transform:scaleX(1.064);transform-origin:0 0">OffSolver</div>
<svg style="left:265px;top:184px" width="32" height="27" viewBox="0 0 32 27"><path d="M2.5 .5h7l1.8 2.2h18.2v6h-27z" fill="url(#gt)" stroke="#4a86d4" stroke-width=".7"/><path d="M.5 5.5h31l-.6 18.5h-29.8z" fill="url(#gf)" stroke="#3f7fd2" stroke-width=".7"/><path d="M1.5 6.8h29" stroke="#fff" stroke-opacity=".6" stroke-width="1"/><path d="M1.5 24.4h29" stroke="#333" stroke-opacity=".8" stroke-width="1.2"/></svg>
<svg style="left:266px;top:197px" width="13" height="14" viewBox="0 0 13 14"><rect x=".6" y=".6" width="12.3" height="13" rx=".8" fill="#f2f2f4" stroke="#aaa8c4" stroke-width=".9"/><rect x="4.2" y="4.4" width="5.2" height="5.2" rx="1" fill="#e8eef8" stroke="#0b3f7a" stroke-width="1.15"/></svg>
<div class="t" style="left:379.30px;top:218px;font-size:13px;line-height:13px;color:#111;letter-spacing:-0.188px">RFInt</div>
<svg style="left:380px;top:184px" width="32" height="27" viewBox="0 0 32 27"><path d="M2.5 .5h7l1.8 2.2h18.2v6h-27z" fill="url(#gt)" stroke="#4a86d4" stroke-width=".7"/><path d="M.5 5.5h31l-.6 18.5h-29.8z" fill="url(#gf)" stroke="#3f7fd2" stroke-width=".7"/><path d="M1.5 6.8h29" stroke="#fff" stroke-opacity=".6" stroke-width="1"/><path d="M1.5 24.4h29" stroke="#333" stroke-opacity=".8" stroke-width="1.2"/></svg>
<svg style="left:381px;top:197px" width="13" height="14" viewBox="0 0 13 14"><rect x=".6" y=".6" width="12.3" height="13" rx=".8" fill="#f2f2f4" stroke="#aaa8c4" stroke-width=".9"/><rect x="4.2" y="4.4" width="5.2" height="5.2" rx="1" fill="#e8eef8" stroke="#0b3f7a" stroke-width="1.15"/></svg>
<div class="t" style="left:479.06px;top:218px;font-size:13px;line-height:13px;color:#111;letter-spacing:0.325px;transform:scaleX(1.080);transform-origin:0 0">Simulator</div>
<svg style="left:495px;top:184px" width="32" height="27" viewBox="0 0 32 27"><path d="M2.5 .5h7l1.8 2.2h18.2v6h-27z" fill="url(#gt)" stroke="#4a86d4" stroke-width=".7"/><path d="M.5 5.5h31l-.6 18.5h-29.8z" fill="url(#gf)" stroke="#3f7fd2" stroke-width=".7"/><path d="M1.5 6.8h29" stroke="#fff" stroke-opacity=".6" stroke-width="1"/><path d="M1.5 24.4h29" stroke="#333" stroke-opacity=".8" stroke-width="1.2"/></svg>
<svg style="left:496px;top:197px" width="13" height="14" viewBox="0 0 13 14"><rect x=".6" y=".6" width="12.3" height="13" rx=".8" fill="#f2f2f4" stroke="#aaa8c4" stroke-width=".9"/><rect x="4.2" y="4.4" width="5.2" height="5.2" rx="1" fill="#e8eef8" stroke="#0b3f7a" stroke-width="1.15"/></svg>
<div class="t" style="left:598.96px;top:218px;font-size:13px;line-height:13px;color:#111;letter-spacing:0.210px;transform:scaleX(1.080);transform-origin:0 0">Solution</div>
<svg style="left:610px;top:184px" width="32" height="27" viewBox="0 0 32 27"><path d="M2.5 .5h7l1.8 2.2h18.2v6h-27z" fill="url(#gt)" stroke="#4a86d4" stroke-width=".7"/><path d="M.5 5.5h31l-.6 18.5h-29.8z" fill="url(#gf)" stroke="#3f7fd2" stroke-width=".7"/><path d="M1.5 6.8h29" stroke="#fff" stroke-opacity=".6" stroke-width="1"/><path d="M1.5 24.4h29" stroke="#333" stroke-opacity=".8" stroke-width="1.2"/></svg>
<svg style="left:611px;top:197px" width="13" height="14" viewBox="0 0 13 14"><rect x=".6" y=".6" width="12.3" height="13" rx=".8" fill="#f2f2f4" stroke="#aaa8c4" stroke-width=".9"/><rect x="4.2" y="4.4" width="5.2" height="5.2" rx="1" fill="#e8eef8" stroke="#0b3f7a" stroke-width="1.15"/></svg>
<div class="t" style="left:717.94px;top:218px;font-size:13px;line-height:13px;color:#111;letter-spacing:0.000px;transform:scaleX(1.031);transform-origin:0 0">Tracker</div>
<svg style="left:725px;top:184px" width="32" height="27" viewBox="0 0 32 27"><path d="M2.5 .5h7l1.8 2.2h18.2v6h-27z" fill="url(#gt)" stroke="#4a86d4" stroke-width=".7"/><path d="M.5 5.5h31l-.6 18.5h-29.8z" fill="url(#gf)" stroke="#3f7fd2" stroke-width=".7"/><path d="M1.5 6.8h29" stroke="#fff" stroke-opacity=".6" stroke-width="1"/><path d="M1.5 24.4h29" stroke="#333" stroke-opacity=".8" stroke-width="1.2"/></svg>
<svg style="left:726px;top:197px" width="13" height="14" viewBox="0 0 13 14"><rect x=".6" y=".6" width="12.3" height="13" rx=".8" fill="#f2f2f4" stroke="#aaa8c4" stroke-width=".9"/><rect x="4.2" y="4.4" width="5.2" height="5.2" rx="1" fill="#e8eef8" stroke="#0b3f7a" stroke-width="1.15"/></svg>
<div class="t" style="left:833.19px;top:218px;font-size:13px;line-height:13px;color:#111;letter-spacing:0.378px;transform:scaleX(1.080);transform-origin:0 0">main.c</div>
<div class="t" style="left:943.02px;top:218px;font-size:13px;line-height:13px;color:#111;letter-spacing:0.045px;transform:scaleX(1.080);transform-origin:0 0">Makefile</div>
<svg style="left:843px;top:181px" width="27" height="31" viewBox="0 0 27 31"><path d="M.5 .5H24.5Q25.5 .5 25.5 1.5V22L17.5 29.5H.5z" fill="#f7f7f7" stroke="#c6c6c6" stroke-width=".9"/><path d="M2.5 3h6M10 3h3M2.5 6h10M14 6h3M2.5 8.5h2M5 11h6M5 14h4M12 15h8M5 17.5h3M9 20h5M5 23h10" stroke="#cfcfcf" stroke-width=".7"/><path d="M18.6 10A6.6 6.6 0 1 0 18.6 19.3" fill="none" stroke="#1e8ae8" stroke-width="3"/><path d="M25.5 22L17.5 29.5Q18.5 25 19.5 24Q21 22.8 25.5 22z" fill="#e4e4e4" stroke="#c0c0c0" stroke-width=".7"/></svg>
<svg style="left:841px;top:197px" width="13" height="14" viewBox="0 0 13 14"><rect x=".6" y=".6" width="12.3" height="13" rx=".8" fill="#f2f2f4" stroke="#aaa8c4" stroke-width=".9"/><rect x="4.2" y="4.4" width="5.2" height="5.2" rx="1" fill="#e8eef8" stroke="#0b3f7a" stroke-width="1.15"/></svg>
<svg style="left:958px;top:181px" width="27" height="31" viewBox="0 0 27 31"><path d="M.5 .5H24.5Q25.5 .5 25.5 1.5V22L17.5 29.5H.5z" fill="#f7f7f7" stroke="#c6c6c6" stroke-width=".9"/><circle cx="8.8" cy="12.3" r="6.2" fill="none" stroke="#c4c4c4" stroke-width="3.2" stroke-dasharray="2.68 2.19"/><circle cx="8.8" cy="12.3" r="5.08" fill="none" stroke="#cdcdcd" stroke-width="2.56"/><circle cx="8.8" cy="12.3" r="2.36" fill="#f0f0f0" stroke="#b8b8b8" stroke-width=".6"/><circle cx="20.2" cy="19" r="4" fill="none" stroke="#c4c4c4" stroke-width="2.4" stroke-dasharray="2.30 1.88"/><circle cx="20.2" cy="19" r="3.16" fill="none" stroke="#cdcdcd" stroke-width="1.92"/><circle cx="20.2" cy="19" r="1.52" fill="#f0f0f0" stroke="#b8b8b8" stroke-width=".6"/><path d="M25.5 22L17.5 29.5Q18.5 25 19.5 24Q21 22.8 25.5 22z" fill="#e4e4e4" stroke="#c0c0c0" stroke-width=".7"/></svg>
<svg style="left:956px;top:197px" width="13" height="14" viewBox="0 0 13 14"><rect x=".6" y=".6" width="12.3" height="13" rx=".8" fill="#f2f2f4" stroke="#aaa8c4" stroke-width=".9"/><rect x="4.2" y="4.4" width="5.2" height="5.2" rx="1" fill="#e8eef8" stroke="#0b3f7a" stroke-width="1.15"/></svg>
<svg style="left:2px;top:2px" width="16" height="17" viewBox="0 0 16 17"><rect x=".8" y=".8" width="13.6" height="15.2" rx="2.2" fill="#fbfbfb" stroke="#8a8a8a" stroke-width="1.3"/><rect x="2.1" y="3.9" width="11" height="3.9" fill="url(#gdrw)"/><rect x="2.1" y="9" width="11" height="5" fill="url(#gdrw)"/><path d="M5.3 3.6v1.5h4.6v-1.5" fill="#fff" stroke="#4a4a4a" stroke-width="1"/><path d="M5.3 8.7v1.5h4.6v-1.5" fill="#fff" stroke="#4a4a4a" stroke-width="1"/></svg>
<svg style="left:25px;top:2px" width="15" height="15" viewBox="0 0 15 15"><circle cx="7.5" cy="7.5" r="7" fill="url(#gbtn)" stroke="#9a9a9a" stroke-width=".8"/><circle cx="7.5" cy="7.5" r=".8" fill="#666"/></svg>
<svg style="left:1302px;top:3px" width="15" height="15" viewBox="0 0 15 15"><circle cx="7.5" cy="7.5" r="7" fill="url(#gbtn)" stroke="#a4a4a4" stroke-width=".8"/><path d="M4.5 6l3 3 3-3" fill="none" stroke="#222" stroke-width="1.4"/></svg>
<svg style="left:1325px;top:3px" width="15" height="15" viewBox="0 0 15 15"><circle cx="7.5" cy="7.5" r="7" fill="url(#gbtn)" stroke="#a4a4a4" stroke-width=".8"/><path d="M7.5 4.5l3 3-3 3-3-3z" fill="none" stroke="#222" stroke-width="1.3"/></svg>
<svg style="left:1348px;top:3px" width="15" height="15" viewBox="0 0 15 15"><circle cx="7.5" cy="7.5" r="7" fill="url(#gbtn)" stroke="#a4a4a4" stroke-width=".8"/><path d="M4.8 4.8l5.4 5.4M10.2 4.8l-5.4 5.4" stroke="#222" stroke-width="1.4"/></svg>
<svg style="left:5px;top:47px" width="16" height="16" viewBox="0 0 16 16"><path d="M.6 8L9.5 1.5V5H15v6H9.5v3.5z" fill="url(#garr2)" stroke="#173f80" stroke-width="1" stroke-linejoin="round"/></svg>
<svg style="left:78px;top:46px" width="16" height="17" viewBox="0 0 16 17"><path d="M8 1l7 10h-4v4.8H5V11H1z" fill="url(#garr)" stroke="#173f80" stroke-width="1" stroke-linejoin="round"/></svg>
<svg style="left:151px;top:47px" width="16" height="16" viewBox="0 0 16 16"><path d="M15.4 8L6.5 1.5V5H1v6h5.5v3.5z" fill="url(#ggrey2)" stroke="#9c9c9c" stroke-width="1" stroke-linejoin="round"/></svg>
<div class="a" style="left:229px;top:45px;width:2px;height:21px;border-left:1px solid #c8c8c8;border-right:1px solid #f2f2f2"></div>
<div class="a" style="left:493px;top:45px;width:2px;height:21px;border-left:1px solid #c8c8c8;border-right:1px solid #f2f2f2"></div>
<div class="a" style="left:235px;top:44px;width:77px;height:22px;border:1px solid #b8b8b8;border-radius:4px;background:linear-gradient(#dadada,#e4e4e4);box-shadow:inset 0 1px 1px rgba(0,0,0,.1)"></div>
<div class="t" style="left:258.26px;top:49px;font-size:12px;line-height:12px;color:#111;letter-spacing:0.217px;transform:scaleX(1.080);transform-origin:0 0">Значки</div>
<svg style="left:238px;top:47px" width="16" height="16" viewBox="0 0 16 16"><rect x=".5" y=".5" width="15" height="15" rx=".8" fill="#fdfdfd" stroke="#a4a4a4" stroke-width=".9"/><path d="M1 2.8h14" stroke="#c8c8c8" stroke-width="1"/><path d="M2.5 5h2.5v2h-2.5zM6.8 5h2.5v2h-2.5zM11 5h2.5v2h-2.5zM2.5 9h2.5v2h-2.5zM6.8 9h2.5v2h-2.5z" fill="#1f6fd8"/></svg>
<svg style="left:318px;top:47px" width="16" height="16" viewBox="0 0 16 16"><rect x=".5" y=".5" width="15" height="15" rx=".8" fill="#fdfdfd" stroke="#a4a4a4" stroke-width=".9"/><path d="M1 2.8h14" stroke="#c8c8c8" stroke-width="1"/><path d="M2.5 5h2.5v2h-2.5zM2.5 9h2.5v2h-2.5z" fill="#1f6fd8"/><path d="M6.5 5.5h6.5M6.5 7.5h5M6.5 10h6.5M6.5 12h5" stroke="#8a8a8a" stroke-width=".8"/></svg>
<svg style="left:405px;top:47px" width="16" height="16" viewBox="0 0 16 16"><rect x=".5" y=".5" width="15" height="15" rx=".8" fill="#fdfdfd" stroke="#a4a4a4" stroke-width=".9"/><path d="M1 2.8h14" stroke="#c8c8c8" stroke-width="1"/><path d="M5.5 3v12.5M10.5 3v12.5" stroke="#b4b4b4" stroke-width="1"/></svg>
<svg style="left:502px;top:48px" width="16" height="14" viewBox="0 0 16 14"><rect x=".5" y=".5" width="15" height="13" rx="1" fill="#fbfbfb" stroke="#a8a8a8" stroke-width=".9"/><rect x="2" y="2" width="12" height="10" fill="url(#gsky)"/><circle cx="7.5" cy="5.8" r="3.6" fill="#d8308a"/><path d="M5 3.5a3.6 3.6 0 0 1 5 0l-1 4z" fill="#f0b030"/><path d="M4.2 6.5a3.6 3.6 0 0 0 2 2.5l-.5-4z" fill="#6a2aa0"/><rect x="6.8" y="9.8" width="1.5" height="1.6" fill="#5a3a20"/></svg>
<svg style="left:607px;top:47px" width="17" height="16" viewBox="0 0 17 16"><rect x=".8" y=".5" width="15" height="15" rx=".8" fill="#fdfdfd" stroke="#a8a8a8" stroke-width=".9"/><path d="M1 2.6h15" stroke="#c4c4c4" stroke-width="1.6"/><path d="M8.4 3.5v11.5" stroke="#c0c0c0" stroke-width=".8"/><path d="M9 13l6-6M9 9l4-4M11 14l4-4" stroke="#e2e2e2" stroke-width="1"/><path d="M12 5.8v6.4M8.8 9h6.4" stroke="#1fa01f" stroke-width="1.5"/></svg>
<svg style="left:715px;top:47px" width="16" height="16" viewBox="0 0 16 16"><rect x=".6" y=".6" width="14.8" height="14.8" rx="1.5" fill="#8a8a8a" stroke="#3c3c3c" stroke-width="1.1"/><rect x="2" y="2" width="12" height="10" fill="#161616"/><path d="M3 3.8l2.2 1.2-2.2 1.2M5.8 6.4h2.5" stroke="#e8e8e8" stroke-width=".9" fill="none"/><path d="M2 13.5h12" stroke="#d0d0d0" stroke-width="1"/></svg>
<svg style="left:809px;top:47px" width="17" height="17" viewBox="0 0 17 17"><rect x="1" y="2" width="14.5" height="13" rx="1.6" fill="#fafafa" stroke="#b4b4b4" stroke-width=".8"/><path d="M2 16h12.5" stroke="#b0b0b0" stroke-opacity=".6" stroke-width="1"/><circle cx="3.8" cy="3.5" r="2.8" fill="#f8d020" stroke="#e0a000" stroke-width=".6"/></svg>
<svg style="left:897px;top:46px" width="16" height="17" viewBox="0 0 16 17"><path d="M5 5.5a5.5 5.5 0 1 1 1.5 9" fill="none" stroke="#b8b8b8" stroke-width="2.6"/><path d="M.3 5.5l5.5-3.5.5 6.5z" fill="#b8b8b8"/></svg>
<svg style="left:992px;top:57px" width="9" height="6" viewBox="0 0 9 6"><path d="M1 1.2l3.5 3.3 3.5-3.3" fill="none" stroke="#555" stroke-width="1.1"/></svg>
<svg style="left:1206px;top:131px" width="128" height="100" viewBox="0 0 128 100"><rect x="4" y="93" width="118" height="5" rx="2" fill="#000" opacity=".55" filter="url(#blur1)"/><path d="M13 .5h23c2 0 3 1 4 2l6 6h70c1.5 0 2 .5 2 2v12h-107v-19c0-2 .5-3 2-3z" fill="#a2c2ee" stroke="#6a9ee0" stroke-width="1"/><path d="M.5 22.5c0-1 1-2 2-2h122.5c1 0 2 1 2 2l-3 71c0 1-1 2-2 2h-116c-1 0-2-1-2-2z" fill="url(#gf)" stroke="#5b95dc" stroke-width="1"/><path d="M2 22h123" stroke="#fff" stroke-opacity=".55" stroke-width="1.5"/><path d="M8 20h5v73h-5zM113 20h5v73h-5z" fill="#fff" fill-opacity=".07"/></svg>
<div class="t" style="left:1247.86px;top:271px;font-size:13px;line-height:13px;color:#111;letter-spacing:0.497px;font-weight:bold;transform:scaleX(1.080);transform-origin:0 0">SR31</div>
<div class="a" style="left:1183px;top:290px;width:173px;height:1px;background:linear-gradient(90deg,rgba(255,255,255,0),#f4f4f4 20%,#f4f4f4 80%,rgba(255,255,255,0))"></div>
<div class="a" style="left:1183px;top:289px;width:173px;height:1px;background:linear-gradient(90deg,rgba(0,0,0,0),rgba(0,0,0,.06) 20%,rgba(0,0,0,.06) 80%,rgba(0,0,0,0))"></div>
<div class="t" style="left:1249.03px;top:298px;font-size:11px;line-height:11px;color:#7a7a7a;letter-spacing:0.648px;transform:scaleX(1.080);transform-origin:0 0">Тип:</div>
<div class="t" style="left:1243.90px;top:316px;font-size:11px;line-height:11px;color:#7a7a7a;letter-spacing:0.938px;transform:scaleX(1.080);transform-origin:0 0">Дата</div>
<div class="t" style="left:1206.99px;top:329px;font-size:11px;line-height:11px;color:#7a7a7a;letter-spacing:0.430px;transform:scaleX(1.080);transform-origin:0 0">изменения:</div>
<div class="t" style="left:1225.26px;top:348px;font-size:11px;line-height:11px;color:#7a7a7a;letter-spacing:0.701px;transform:scaleX(1.080);transform-origin:0 0">Оценка:</div>
<div class="t" style="left:1232.82px;top:365px;font-size:11px;line-height:11px;color:#7a7a7a;letter-spacing:0.841px;transform:scaleX(1.080);transform-origin:0 0">Метки:</div>
<div class="t" style="left:1189.52px;top:382px;font-size:11px;line-height:11px;color:#7a7a7a;letter-spacing:0.550px;transform:scaleX(1.080);transform-origin:0 0">Комментарий:</div>
<div class="t" style="left:1280.79px;top:298px;font-size:11px;line-height:11px;color:#111;letter-spacing:0.361px;transform:scaleX(1.080);transform-origin:0 0">Папка</div>
<div class="t" style="left:1281.06px;top:316px;font-size:11px;line-height:11px;color:#111;letter-spacing:0.682px;transform:scaleX(1.080);transform-origin:0 0">Сегодня</div>
<div class="t" style="left:1280.79px;top:329px;font-size:11px;line-height:11px;color:#111;letter-spacing:0.412px;transform:scaleX(1.080);transform-origin:0 0">15:13</div>
<div class="t" style="left:1281.60px;top:365px;font-size:11px;line-height:11px;color:#0b55b0;letter-spacing:0.816px;transform:scaleX(1.080);transform-origin:0 0">Добавить...</div>
<div class="a" style="left:1281px;top:375px;width:71px;height:1px;background:#0b55b0"></div>
<div class="t" style="left:1281.60px;top:382px;font-size:11px;line-height:11px;color:#0b55b0;letter-spacing:0.816px;transform:scaleX(1.080);transform-origin:0 0">Добавить...</div>
<div class="a" style="left:1281px;top:392px;width:71px;height:1px;background:#0b55b0"></div>
<svg style="left:1281.5px;top:346px" width="14" height="14" viewBox="0 0 14 14"><path d="M6.70 0.90 L8.70 4.15 L12.41 5.05 L9.93 7.95 L10.23 11.75 L6.70 10.30 L3.17 11.75 L3.47 7.95 L0.99 5.05 L4.70 4.15Z" fill="url(#gstar)" stroke="#9a9a9a" stroke-width="1.1" stroke-linejoin="round"/></svg>
<svg style="left:1295.2px;top:346px" width="14" height="14" viewBox="0 0 14 14"><path d="M6.70 0.90 L8.70 4.15 L12.41 5.05 L9.93 7.95 L10.23 11.75 L6.70 10.30 L3.17 11.75 L3.47 7.95 L0.99 5.05 L4.70 4.15Z" fill="url(#gstar)" stroke="#9a9a9a" stroke-width="1.1" stroke-linejoin="round"/></svg>
<svg style="left:1308.9px;top:346px" width="14" height="14" viewBox="0 0 14 14"><path d="M6.70 0.90 L8.70 4.15 L12.41 5.05 L9.93 7.95 L10.23 11.75 L6.70 10.30 L3.17 11.75 L3.47 7.95 L0.99 5.05 L4.70 4.15Z" fill="url(#gstar)" stroke="#9a9a9a" stroke-width="1.1" stroke-linejoin="round"/></svg>
<svg style="left:1322.6px;top:346px" width="14" height="14" viewBox="0 0 14 14"><path d="M6.70 0.90 L8.70 4.15 L12.41 5.05 L9.93 7.95 L10.23 11.75 L6.70 10.30 L3.17 11.75 L3.47 7.95 L0.99 5.05 L4.70 4.15Z" fill="url(#gstar)" stroke="#9a9a9a" stroke-width="1.1" stroke-linejoin="round"/></svg>
<svg style="left:1336.3px;top:346px" width="14" height="14" viewBox="0 0 14 14"><path d="M6.70 0.90 L8.70 4.15 L12.41 5.05 L9.93 7.95 L10.23 11.75 L6.70 10.30 L3.17 11.75 L3.47 7.95 L0.99 5.05 L4.70 4.15Z" fill="url(#gstar)" stroke="#9a9a9a" stroke-width="1.1" stroke-linejoin="round"/></svg>
<div class="t" style="left:222.22px;top:572px;font-size:13px;line-height:13px;color:#111;letter-spacing:0.224px;transform:scaleX(1.080);transform-origin:0 0">13 папок, 2 файла (6,7 КиБ)</div>
<svg style="left:1026px;top:572px" width="15" height="15" viewBox="0 0 15 15"><path d="M7.5 7.5l6.5 6" stroke="#6a6a6a" stroke-width="1.3"/><circle cx="4.8" cy="4.8" r="4.4" fill="url(#glens)" stroke="#4a7fc0" stroke-width=".9"/><path d="M2.6 4.8h4.4" stroke="#0a4a9a" stroke-width="1.2"/></svg>
<svg style="left:1152px;top:572px" width="15" height="15" viewBox="0 0 15 15"><path d="M7.5 7.5l6.5 6" stroke="#6a6a6a" stroke-width="1.3"/><circle cx="4.8" cy="4.8" r="4.4" fill="url(#glens)" stroke="#4a7fc0" stroke-width=".9"/><path d="M2.6 4.8h4.4" stroke="#0a4a9a" stroke-width="1.2"/><path d="M4.8 2.6v4.4" stroke="#0a4a9a" stroke-width="1.2"/></svg>
<div class="a" style="left:1050px;top:577px;width:92px;height:2px;background:#a8a8a8;border-bottom:1px solid #e8e8e8"></div>
<div class="a" style="left:1058px;top:570px;width:10px;height:18px;background:linear-gradient(90deg,#e8e8e8,#fafafa,#e0e0e0);border:1px solid #a8a8a8;border-radius:5px"></div>
<div class="a" style="left:4px;top:618px;font-family:'Liberation Mono',monospace;font-size:13.34px;line-height:15px;color:#bdbdbd;white-space:pre;will-change:transform">ofei@Korogodin-Notebook:/media/disk_D$ ^C
ofei@Korogodin-Notebook:/media/disk_D$ cd /media/disk_D/Ilya
ofei@Korogodin-Notebook:/media/disk_D/Ilya$ ^C
ofei@Korogodin-Notebook:/media/disk_D/Ilya$ cd /media/disk_D/Ilya/Center
ofei@Korogodin-Notebook:/media/disk_D/Ilya/Center$ ^C
ofei@Korogodin-Notebook:/media/disk_D/Ilya/Center$ cd /media/disk_D/Ilya/Center/SR31
ofei@Korogodin-Notebook:/media/disk_D/Ilya/Center/SR31$ svn co svn://193.233.71.244:4000/SR31/trunk/ .</div>
<div class="a" style="left:820px;top:707px;width:8px;height:15px;border:1px solid #c4c4c4"></div>
<svg style="left:1347px;top:619px" width="14" height="8" viewBox="0 0 14 8"><path d="M2 6.5l5-5 5 5" fill="none" stroke="#333" stroke-width="1.4"/></svg>
<div class="a" style="left:1347px;top:632px;width:15px;height:69px;background:#b4b3b2;border-radius:5px;box-shadow:inset 0 1px 2px rgba(0,0,0,.25)"></div>
<div class="a" style="left:1349px;top:672px;width:11px;height:28px;background:linear-gradient(90deg,#e4e4e4,#f4f4f4,#dcdcdc);border:1px solid #9a9a9a;border-radius:3px"></div>
<svg style="left:1347px;top:705px" width="14" height="8" viewBox="0 0 14 8"><path d="M2 6.5l5-5 5 5" fill="none" stroke="#333" stroke-width="1.4"/></svg>
<svg style="left:1347px;top:717px" width="14" height="8" viewBox="0 0 14 8"><path d="M2 1.5l5 5 5-5" fill="none" stroke="#333" stroke-width="1.4"/></svg>
<div class="a" style="left:105px;top:336px;width:2px;height:2px;background:#ececec;box-shadow:inset 1px 1px 0 #b4b4b4"></div>
<div class="a" style="left:108px;top:336px;width:2px;height:2px;background:#ececec;box-shadow:inset 1px 1px 0 #b4b4b4"></div>
<div class="a" style="left:111px;top:336px;width:2px;height:2px;background:#ececec;box-shadow:inset 1px 1px 0 #b4b4b4"></div>
<div class="a" style="left:180px;top:591px;width:2px;height:2px;background:#ececec;box-shadow:inset 1px 1px 0 #b4b4b4"></div>
<div class="a" style="left:183px;top:591px;width:2px;height:2px;background:#ececec;box-shadow:inset 1px 1px 0 #b4b4b4"></div>
<div class="a" style="left:186px;top:591px;width:2px;height:2px;background:#ececec;box-shadow:inset 1px 1px 0 #b4b4b4"></div>
<div class="a" style="left:430px;top:591px;width:2px;height:2px;background:#ececec;box-shadow:inset 1px 1px 0 #b4b4b4"></div>
<div class="a" style="left:433px;top:591px;width:2px;height:2px;background:#ececec;box-shadow:inset 1px 1px 0 #b4b4b4"></div>
<div class="a" style="left:436px;top:591px;width:2px;height:2px;background:#ececec;box-shadow:inset 1px 1px 0 #b4b4b4"></div>
<div class="a" style="left:680px;top:591px;width:2px;height:2px;background:#ececec;box-shadow:inset 1px 1px 0 #b4b4b4"></div>
<div class="a" style="left:683px;top:591px;width:2px;height:2px;background:#ececec;box-shadow:inset 1px 1px 0 #b4b4b4"></div>
<div class="a" style="left:686px;top:591px;width:2px;height:2px;background:#ececec;box-shadow:inset 1px 1px 0 #b4b4b4"></div>
<div class="a" style="left:930px;top:591px;width:2px;height:2px;background:#ececec;box-shadow:inset 1px 1px 0 #b4b4b4"></div>
<div class="a" style="left:933px;top:591px;width:2px;height:2px;background:#ececec;box-shadow:inset 1px 1px 0 #b4b4b4"></div>
<div class="a" style="left:936px;top:591px;width:2px;height:2px;background:#ececec;box-shadow:inset 1px 1px 0 #b4b4b4"></div>
<div class="a" style="left:1180px;top:591px;width:2px;height:2px;background:#ececec;box-shadow:inset 1px 1px 0 #b4b4b4"></div>
<div class="a" style="left:1183px;top:591px;width:2px;height:2px;background:#ececec;box-shadow:inset 1px 1px 0 #b4b4b4"></div>
<div class="a" style="left:1186px;top:591px;width:2px;height:2px;background:#ececec;box-shadow:inset 1px 1px 0 #b4b4b4"></div>
<div class="a" style="left:218px;top:202px;width:2px;height:2px;background:#ececec;box-shadow:inset 1px 1px 0 #b4b4b4"></div>
<div class="a" style="left:218px;top:205px;width:2px;height:2px;background:#ececec;box-shadow:inset 1px 1px 0 #b4b4b4"></div>
<div class="a" style="left:218px;top:208px;width:2px;height:2px;background:#ececec;box-shadow:inset 1px 1px 0 #b4b4b4"></div>
<div class="a" style="left:1172px;top:452px;width:2px;height:2px;background:#ececec;box-shadow:inset 1px 1px 0 #b4b4b4"></div>
<div class="a" style="left:1172px;top:455px;width:2px;height:2px;background:#ececec;box-shadow:inset 1px 1px 0 #b4b4b4"></div>
<div class="a" style="left:1172px;top:458px;width:2px;height:2px;background:#ececec;box-shadow:inset 1px 1px 0 #b4b4b4"></div>
</body></html>
